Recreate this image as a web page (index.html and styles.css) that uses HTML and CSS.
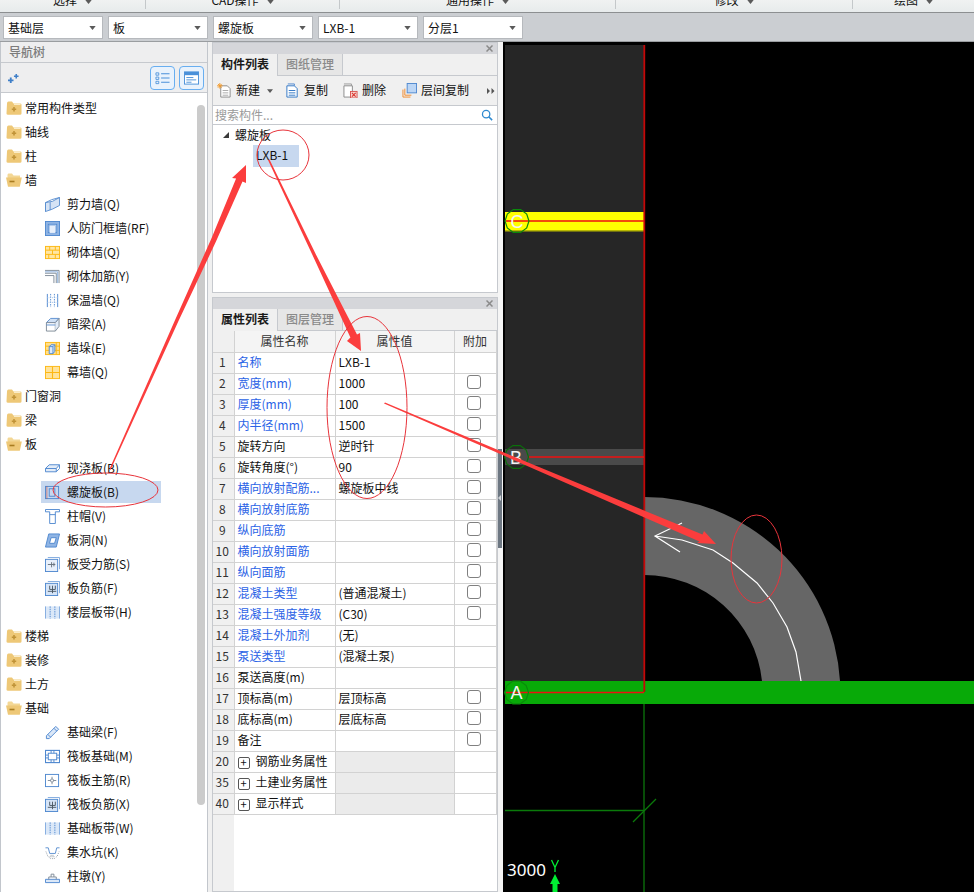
FILE: index.html
```html
<!DOCTYPE html>
<html lang="zh">
<head>
<meta charset="utf-8">
<title>螺旋板</title>
<link rel="stylesheet" href="styles.css">
</head>
<body>
<svg class="defs" width="0" height="0">
  <defs>
    <symbol id="fc" viewBox="0 0 16 14"><path d="M1 2.500Q1 .5 2.500 .5H6L7.500 2.500H14Q15.500 2.500 15.500 3.500V12.500Q15.500 13.800 14 13.800H2Q.5 13.800 .5 12.500Z" fill="#eec877"/><path d="M8 2.500H14.500V4H8Z" fill="#fbecc8"/><path d="M5.800 8.300H10.200M8 6.100V10.500" stroke="#c09338" stroke-width="1.600"/></symbol>
    <symbol id="fo" viewBox="0 0 16 14"><path d="M1.500 2Q1.500 .5 2.500 .5H6L7.500 2.500H14V5H1.500Z" fill="#f3d795"/><path d="M0 4.500H15.800L13.800 13.800H2Z" fill="#eec877"/><path d="M3.500 8.500H8.500" stroke="#a97c20" stroke-width="1.600"/></symbol>
    <symbol id="i-shear" viewBox="0 0 16 16"><path d="M.5 6Q8 6 15.500 .5V9Q8 13.500 .5 15.500Z" fill="#d5e3f5" stroke="#5b8fd0"/><path d="M.5 6V15.500M5.500 5.500V14" stroke="#5b8fd0"/><path d="M.5 6Q6 2.500 15.500 .5" stroke="#5b8fd0" fill="none"/></symbol>
    <symbol id="i-door" viewBox="0 0 16 16"><rect x=".5" y=".5" width="15" height="15" fill="#8fb4e4" stroke="#4f88cf"/><rect x="3.500" y="3.500" width="9" height="9" fill="#fff" stroke="#4f88cf"/><rect x="5" y="5" width="6" height="8" fill="#e8f0fb" stroke="#7ea9de" stroke-width=".6"/></symbol>
    <symbol id="i-brick" viewBox="0 0 16 16"><rect x=".5" y="1.500" width="15" height="13" fill="#ffe6a3" stroke="#fdb813"/><path d="M.5 5.500H15.500M.5 10H15.500M5 1.500V5.500M11 1.500V5.500M8 5.500V10M4 10V14.500M11 10V14.500" stroke="#fdb813"/></symbol>
    <symbol id="i-rebar" viewBox="0 0 16 16"><path d="M0 1.500H15V15M0 4.500H12V15M0 7H9.500V15" fill="none" stroke="#7e8a96"/><path d="M0 3H13.500V15" fill="none" stroke="#5b8fd0" stroke-width=".7"/></symbol>
    <symbol id="i-insul" viewBox="0 0 16 16"><path d="M2.500 1V15M13.500 1V15" stroke="#4f88cf"/><path d="M6 1V15M10 1V15" stroke="#4f88cf" stroke-dasharray="1.500 1.200"/><path d="M2.500 5H13.500M2.500 10H13.500" stroke="#9dbfe8" stroke-dasharray="1 1.500"/></symbol>
    <symbol id="i-beam" viewBox="0 0 16 16"><path d="M1.500 6L6 1.500H15L11 6Z" fill="#cfe0f5" stroke="#5b8fd0"/><path d="M1.500 6H11V15H1.500Z" fill="#fff" stroke="#7e8a96"/><path d="M11 6L15 1.500V10L11 15" fill="#e2ecf8" stroke="#7e8a96"/><path d="M1.500 8.500H11" stroke="#5b8fd0"/></symbol>
    <symbol id="i-pier" viewBox="0 0 16 16"><rect x=".5" y="1.500" width="15" height="13" fill="#ffdf8e" stroke="#fdb813"/><path d="M.5 5.500H15.500M.5 10H15.500M12 1.500V14.500" stroke="#fdb813"/><path d="M4.500 6L6.500 4H10.500V11L8.500 13.500H4.500Z" fill="#dce9f8" stroke="#4f88cf"/><path d="M4.500 6H8.500V13.500M8.500 6L10.500 4" fill="none" stroke="#4f88cf"/></symbol>
    <symbol id="i-curtain" viewBox="0 0 16 16"><rect x=".5" y="1.500" width="15" height="13" fill="#ffe39b" stroke="#fdb813"/><path d="M.5 8H15.500M8 1.500V14.500" stroke="#fdb813" stroke-width="1.200"/></symbol>
    <symbol id="i-slab" viewBox="0 0 16 16"><path d="M.5 8L4.500 4H15.500L12 8V11.500H.5Z" fill="#e2ecf8" stroke="#4f88cf"/><path d="M.5 8H12M12 11.500L15.500 8V4" fill="none" stroke="#4f88cf"/></symbol>
    <symbol id="i-spiral" viewBox="0 0 16 16"><rect x=".5" y="1.500" width="14" height="13" fill="none" stroke="#4f88cf"/><rect x="4.500" y="4" width="6" height="8" fill="none" stroke="#4f88cf"/><path d="M2 1.500V14.500" stroke="#c0392b" stroke-width=".6"/></symbol>
    <symbol id="i-cap" viewBox="0 0 16 16"><path d="M.5 .5H15.500V3H11V15.500H5V3H.5Z" fill="#fff" stroke="#4f88cf"/><path d="M5 6H11" stroke="#4f88cf"/></symbol>
    <symbol id="i-hole" viewBox="0 0 16 16"><path d="M4 1H15.500L12 15H.5Z" fill="#8fb4e4" stroke="#4f88cf"/><path d="M6.500 5H12L10.200 11H4.800Z" fill="#fff" stroke="#4f88cf"/></symbol>
    <symbol id="i-slabbar" viewBox="0 0 16 16"><path d="M3 .5H15.500V13" fill="none" stroke="#7ea9de"/><rect x=".5" y="2.500" width="13" height="13" fill="#e8f0fb" stroke="#4f88cf"/><path d="M3 8H11M7 5.500V11M9.500 6V10" stroke="#66727e" fill="none"/></symbol>
    <symbol id="i-slabneg" viewBox="0 0 16 16"><path d="M3 .5H15.500V13" fill="none" stroke="#7ea9de"/><rect x=".5" y="2.500" width="13" height="13" fill="#d5e4f7" stroke="#4f88cf"/><path d="M5 5V9H11V5M3 11H12M8 5V13" stroke="#4a5662" fill="none"/></symbol>
    <symbol id="i-band" viewBox="0 0 16 16"><rect x=".5" y="1.500" width="15" height="13" fill="#dbe8f8"/><path d="M.5 1.500V14.500M15.500 1.500V14.500" stroke="#7ea9de"/><path d="M5.500 1.500V14.500M10.500 1.500V14.500" stroke="#4f88cf" stroke-dasharray="1.500 1"/></symbol>
    <symbol id="i-fbeam" viewBox="0 0 16 16"><path d="M1.500 11.500L11.500 1.500L14.500 4.500L4.500 14.500L1.500 14.500Z" fill="#dbe8f8" stroke="#4f88cf"/><path d="M9.500 3.500L12.500 6.500M3 10L6 13" stroke="#4f88cf"/></symbol>
    <symbol id="i-raft" viewBox="0 0 16 16"><rect x=".5" y="1.500" width="15" height="13" fill="#fff" stroke="#4f88cf" stroke-width="1.200"/><rect x="3.500" y="4.500" width="9" height="7" fill="none" stroke="#4f88cf"/><path d="M.5 6.500H3.500M.5 9.500H3.500M12.500 6.500H15.500M12.500 9.500H15.500M6.500 1.500V4.500M9.500 1.500V4.500M6.500 11.500V14.500M9.500 11.500V14.500" stroke="#4f88cf"/></symbol>
    <symbol id="i-raftbar" viewBox="0 0 16 16"><rect x=".5" y="1.500" width="14" height="13" fill="#fff" stroke="#4f88cf"/><path d="M3 8H6M9 8H12M7.500 4V6.500M7.500 9.500V12" stroke="#7e8a96"/><rect x="6" y="6.500" width="3" height="3" rx="1" fill="none" stroke="#7e8a96"/></symbol>
    <symbol id="i-pit" viewBox="0 0 16 16"><path d="M.5 3H3.500L5 9H11L12.500 3H15.500" fill="none" stroke="#5b8fd0"/><path d="M1 7L3 12L6 14.500H10L13 12L15 7" fill="none" stroke="#8a949e" stroke-dasharray="1 1.200"/><path d="M6 11H10M5 12.500H11" stroke="#8a949e" stroke-dasharray="1 1"/></symbol>
    <symbol id="i-pad" viewBox="0 0 16 16"><path d="M.5 11H15.500V14.500H.5Z" fill="#dbe8f8" stroke="#4f88cf"/><path d="M4 11V8.500H12V11M6.500 8.500V5.500H9.500V8.500" fill="none" stroke="#7e8a96"/></symbol>
    <symbol id="caret" viewBox="0 0 8 5"><path d="M0 0H8L4 5Z" fill="#5a5a5a"/></symbol>
    <symbol id="cross" viewBox="0 0 7 7"><path d="M.5 .5L6.500 6.500M6.500 .5L.5 6.500" stroke="#8a8a8a" stroke-width="1.500"/></symbol>
    <polygon id="ring" points="12,0 9.700,7 3.700,11.400 -3.700,11.400 -9.700,7 -12,0 -9.700,-7 -3.700,-11.400 3.700,-11.400 9.700,-7" fill="none" stroke-width="1.200"/>
  </defs>
</svg>

<div class="ribbon">
  <div class="rib-group rib-a"><span>选择</span><svg class="rib-caret"><use href="#caret"/></svg></div>
  <div class="rib-group rib-b"><span>CAD操作</span><svg class="rib-caret"><use href="#caret"/></svg></div>
  <div class="rib-group rib-c"><span>通用操作</span><svg class="rib-caret"><use href="#caret"/></svg></div>
  <div class="rib-group rib-d"><span>修改</span><svg class="rib-caret"><use href="#caret"/></svg></div>
  <div class="rib-group rib-e"><span>绘图</span><svg class="rib-caret"><use href="#caret"/></svg></div>
</div>

<div class="selectors">
  <div class="select"><span>基础层</span><svg class="sel-caret"><use href="#caret"/></svg></div>
  <div class="select"><span>板</span><svg class="sel-caret"><use href="#caret"/></svg></div>
  <div class="select"><span>螺旋板</span><svg class="sel-caret"><use href="#caret"/></svg></div>
  <div class="select"><span>LXB-1</span><svg class="sel-caret"><use href="#caret"/></svg></div>
  <div class="select"><span>分层1</span><svg class="sel-caret"><use href="#caret"/></svg></div>
</div>

<div class="main">
  <aside class="nav">
    <div class="nav-title">导航树</div>
    <div class="nav-tools">
      <svg class="sparkle" viewBox="0 0 14 12"><path d="M4 5V11M1 8H7" stroke="#3f7fc8" stroke-width="2"/><path d="M10 1V6M7.500 3.500H12.500" stroke="#3f7fc8" stroke-width="1.700"/></svg>
      <div class="nav-btn first"><svg viewBox="0 0 16 14"><path d="M1 1.500H4V4H1ZM1 6H4V8.500H1ZM1 10.500H4V13H1Z" fill="none" stroke="#4a90d9" stroke-width=".9"/><path d="M6.500 2.500H15.500M6.500 7H15.500M6.500 11.500H15.500" stroke="#4a90d9" stroke-width="1.100"/></svg></div>
      <div class="nav-btn"><svg viewBox="0 0 16 14"><rect x=".5" y=".5" width="15" height="13" fill="#fff" stroke="#4a90d9"/><rect x=".5" y=".5" width="15" height="3.500" fill="#4a90d9"/><path d="M2.500 6.500H10M2.500 9H13M2.500 11.500H8" stroke="#4a90d9"/></svg></div>
    </div>
    <div class="tree">
      <div class="scrollbar"></div>
      <div class="row"><svg class="folder"><use href="#fc"/></svg><span>常用构件类型</span></div>
      <div class="row"><svg class="folder"><use href="#fc"/></svg><span>轴线</span></div>
      <div class="row"><svg class="folder"><use href="#fc"/></svg><span>柱</span></div>
      <div class="row"><svg class="folder"><use href="#fo"/></svg><span>墙</span></div>
      <div class="row child"><svg class="ico"><use href="#i-shear"/></svg><span>剪力墙(Q)</span></div>
      <div class="row child"><svg class="ico"><use href="#i-door"/></svg><span>人防门框墙(RF)</span></div>
      <div class="row child"><svg class="ico"><use href="#i-brick"/></svg><span>砌体墙(Q)</span></div>
      <div class="row child"><svg class="ico"><use href="#i-rebar"/></svg><span>砌体加筋(Y)</span></div>
      <div class="row child"><svg class="ico"><use href="#i-insul"/></svg><span>保温墙(Q)</span></div>
      <div class="row child"><svg class="ico"><use href="#i-beam"/></svg><span>暗梁(A)</span></div>
      <div class="row child"><svg class="ico"><use href="#i-pier"/></svg><span>墙垛(E)</span></div>
      <div class="row child"><svg class="ico"><use href="#i-curtain"/></svg><span>幕墙(Q)</span></div>
      <div class="row"><svg class="folder"><use href="#fc"/></svg><span>门窗洞</span></div>
      <div class="row"><svg class="folder"><use href="#fc"/></svg><span>梁</span></div>
      <div class="row"><svg class="folder"><use href="#fo"/></svg><span>板</span></div>
      <div class="row child"><svg class="ico"><use href="#i-slab"/></svg><span>现浇板(B)</span></div>
      <div class="row child selected"><svg class="ico"><use href="#i-spiral"/></svg><span>螺旋板(B)</span></div>
      <div class="row child"><svg class="ico"><use href="#i-cap"/></svg><span>柱帽(V)</span></div>
      <div class="row child"><svg class="ico"><use href="#i-hole"/></svg><span>板洞(N)</span></div>
      <div class="row child"><svg class="ico"><use href="#i-slabbar"/></svg><span>板受力筋(S)</span></div>
      <div class="row child"><svg class="ico"><use href="#i-slabneg"/></svg><span>板负筋(F)</span></div>
      <div class="row child"><svg class="ico"><use href="#i-band"/></svg><span>楼层板带(H)</span></div>
      <div class="row"><svg class="folder"><use href="#fc"/></svg><span>楼梯</span></div>
      <div class="row"><svg class="folder"><use href="#fc"/></svg><span>装修</span></div>
      <div class="row"><svg class="folder"><use href="#fc"/></svg><span>土方</span></div>
      <div class="row"><svg class="folder"><use href="#fo"/></svg><span>基础</span></div>
      <div class="row child"><svg class="ico"><use href="#i-fbeam"/></svg><span>基础梁(F)</span></div>
      <div class="row child"><svg class="ico"><use href="#i-raft"/></svg><span>筏板基础(M)</span></div>
      <div class="row child"><svg class="ico"><use href="#i-raftbar"/></svg><span>筏板主筋(R)</span></div>
      <div class="row child"><svg class="ico"><use href="#i-slabneg"/></svg><span>筏板负筋(X)</span></div>
      <div class="row child"><svg class="ico"><use href="#i-band"/></svg><span>基础板带(W)</span></div>
      <div class="row child"><svg class="ico"><use href="#i-pit"/></svg><span>集水坑(K)</span></div>
      <div class="row child"><svg class="ico"><use href="#i-pad"/></svg><span>柱墩(Y)</span></div>
    </div>
  </aside>

  <div class="middle">
    <section class="panel top-panel">
      <div class="grip"><svg class="close"><use href="#cross"/></svg></div>
      <div class="tabs"><div class="tab active">构件列表</div><div class="tab">图纸管理</div></div>
      <div class="tools">
        <div class="tool"><svg viewBox="0 0 16 16"><path d="M4 3H11L14 6V15H4Z" fill="#fff" stroke="#8a8a8a"/><path d="M6 8H12M6 10.500H12M6 13H12" stroke="#a8a8a8"/><path d="M3 0V6M0 3H6M1 1L5 5M5 1L1 5" stroke="#f29b2c"/></svg><span>新建</span><svg class="tool-caret"><use href="#caret"/></svg></div>
        <div class="tool t2"><svg viewBox="0 0 16 16"><path d="M3 1H10V3" fill="none" stroke="#4f88cf"/><path d="M2 3H10L13 6V15H2Z" fill="#fff" stroke="#2f75c4"/><path d="M4 8H11M4 10.500H11M4 13H11" stroke="#2f75c4"/></svg><span>复制</span></div>
        <div class="tool t3"><svg viewBox="0 0 16 16"><path d="M1 1H9V3" fill="none" stroke="#9a9a9a"/><path d="M1 3H10V15H1Z" fill="#fff" stroke="#8a8a8a"/><rect x="8" y="9" width="7" height="7" fill="#f6d5d0" stroke="#d9534f"/><path d="M9.500 10.500L13.500 14.500M13.500 10.500L9.500 14.500" stroke="#d9342b" stroke-width="1.200"/></svg><span>删除</span></div>
        <div class="tool t4"><svg viewBox="0 0 16 16"><path d="M1 7V15H9M3 6V13H10" fill="none" stroke="#f08a2c"/><rect x="5.500" y=".5" width="10" height="10" fill="#bcd6f5" stroke="#4f88cf"/></svg><span>层间复制</span></div>
        <svg class="more" viewBox="0 0 8 6"><path d="M0 0L3 3L0 6ZM4.500 0L7.500 3L4.500 6Z" fill="#555"/></svg>
      </div>
      <div class="search"><span>搜索构件...</span><svg viewBox="0 0 14 14"><circle cx="6" cy="6" r="4.300" fill="none" stroke="#2f8ad0" stroke-width="1.500"/><path d="M9 9L13 13" stroke="#2f8ad0" stroke-width="1.800"/></svg></div>
      <div class="comp-tree">
        <div class="comp-head"><i class="tri"></i><span>螺旋板</span></div>
        <div class="comp-item">LXB-1</div>
      </div>
    </section>

    <section class="panel bottom-panel">
      <div class="grip"><svg class="close"><use href="#cross"/></svg></div>
      <div class="tabs"><div class="tab active">属性列表</div><div class="tab">图层管理</div></div>
      <div class="table-wrap">
        <table class="props">
          <colgroup><col class="c1"><col class="c2"><col class="c3"><col class="c4"></colgroup>
          <thead><tr><th></th><th>属性名称</th><th>属性值</th><th>附加</th></tr></thead>
          <tbody>
            <tr><td class="n">1</td><td class="blue">名称</td><td>LXB-1</td><td></td></tr>
            <tr><td class="n">2</td><td class="blue">宽度(mm)</td><td>1000</td><td class="k"><i></i></td></tr>
            <tr><td class="n">3</td><td class="blue">厚度(mm)</td><td>100</td><td class="k"><i></i></td></tr>
            <tr><td class="n">4</td><td class="blue">内半径(mm)</td><td>1500</td><td class="k"><i></i></td></tr>
            <tr><td class="n">5</td><td>旋转方向</td><td>逆时针</td><td class="k"><i></i></td></tr>
            <tr><td class="n">6</td><td>旋转角度(°)</td><td>90</td><td class="k"><i></i></td></tr>
            <tr><td class="n">7</td><td class="blue">横向放射配筋...</td><td>螺旋板中线</td><td class="k"><i></i></td></tr>
            <tr><td class="n">8</td><td class="blue">横向放射底筋</td><td></td><td class="k"><i></i></td></tr>
            <tr><td class="n">9</td><td class="blue">纵向底筋</td><td></td><td class="k"><i></i></td></tr>
            <tr><td class="n">10</td><td class="blue">横向放射面筋</td><td></td><td class="k"><i></i></td></tr>
            <tr><td class="n">11</td><td class="blue">纵向面筋</td><td></td><td class="k"><i></i></td></tr>
            <tr><td class="n">12</td><td class="blue">混凝土类型</td><td>(普通混凝土)</td><td class="k"><i></i></td></tr>
            <tr><td class="n">13</td><td class="blue">混凝土强度等级</td><td>(C30)</td><td class="k"><i></i></td></tr>
            <tr><td class="n">14</td><td class="blue">混凝土外加剂</td><td>(无)</td><td></td></tr>
            <tr><td class="n">15</td><td class="blue">泵送类型</td><td>(混凝土泵)</td><td></td></tr>
            <tr><td class="n">16</td><td>泵送高度(m)</td><td></td><td></td></tr>
            <tr><td class="n">17</td><td>顶标高(m)</td><td>层顶标高</td><td class="k"><i></i></td></tr>
            <tr><td class="n">18</td><td>底标高(m)</td><td>层底标高</td><td class="k"><i></i></td></tr>
            <tr><td class="n">19</td><td>备注</td><td></td><td class="k"><i></i></td></tr>
            <tr><td class="n">20</td><td class="grp"><b>+</b>钢筋业务属性</td><td class="shade"></td><td></td></tr>
            <tr><td class="n">35</td><td class="grp"><b>+</b>土建业务属性</td><td class="shade"></td><td></td></tr>
            <tr><td class="n">40</td><td class="grp"><b>+</b>显示样式</td><td class="shade"></td><td></td></tr>
          </tbody>
        </table>
        <div class="table-rest"></div>
      </div>
    </section>
  </div>

  <div class="splitter"><div class="handle"></div></div>

  <div class="canvas">
    <svg class="cad" width="471" height="850" viewBox="503 42 471 850">
      <rect x="503" y="42" width="471" height="850" fill="#000"/>
      <rect x="505" y="45" width="139" height="636" fill="#262626"/>
      <path d="M644 497A196 196 0 0 1 840 681H762A118 118 0 0 0 644 575Z" fill="#666"/>
      <rect x="505" y="212" width="139" height="19" fill="#ffff00"/>
      <rect x="505" y="230" width="139" height="1.500" fill="#b8b800"/>
      <rect x="505" y="449" width="139" height="16" fill="#4a4a4a"/>
      <rect x="505" y="681" width="469" height="23" fill="#08aa08"/>
      <path d="M644 704V892" stroke="#0a660a" stroke-width="1.500"/>
      <path d="M505 810.500H644" stroke="#0a7a0a" stroke-width="1.500"/>
      <path d="M633 822L656 799" stroke="#0a7a0a" stroke-width="1.200"/>
      <path d="M644.300 45V692" stroke="#c40808" stroke-width="1.800"/>
      <path d="M506 221H644M528 457H644M506 692.500H644" stroke="#ee1010" stroke-width="1.500"/>
      <path d="M682 523L655 536L680 552M655 536L682 540L713 550L733 563L757 583L773 603L787 627L796 652L801 681" fill="none" stroke="#fff" stroke-width="1.200"/>
      <use href="#ring" transform="translate(517 221)" stroke="#0a8a0a"/>
      <use href="#ring" transform="translate(516.500 457)" stroke="#0a700a"/>
      <use href="#ring" transform="translate(516.500 692.500)" stroke="#0a8a0a"/>
      <text x="517" y="227.500" class="axis">C</text>
      <text x="516" y="463.500" class="axis">B</text>
      <text x="516.500" y="699" class="axis">A</text>
      <text x="507" y="876" class="scale">3000</text>
      <path d="M551.500 860L555 867.500L558.500 860M555 867.500V872" fill="none" stroke="#00ee33" stroke-width="1.300"/>
      <path d="M555 874L560 884H557.500V892H552.500V884H550Z" fill="#00ee33"/>
    </svg>
  </div>

  <svg class="notes" width="974" height="892" viewBox="0 0 974 892">
    <g fill="#fb3d3d">
      <polygon points="109.500,469 110.500,470 178.600,320.700 216.200,241.100 242.500,181.400 246,183 246,165 232,178 236.100,178.600 211.200,238.900 175.400,319.300"/>
      <polygon points="268,160 269.500,159.500 315.800,254.300 338.600,298.800 357,334.400 360,333 361,351 347,341 350.400,337.600 333.800,301.200 312.800,255.700"/>
      <polygon points="384,403.500 385,402.500 513.600,456.600 645.200,510.900 702.500,534.500 704,531 716,544 697,543 699.500,541.500 642.800,516.700 512.400,459.400"/>
    </g>
    <g fill="none" stroke="#e8343b" stroke-width="1">
      <ellipse cx="283" cy="155" rx="26" ry="25"/>
      <ellipse cx="105.500" cy="490" rx="52.500" ry="17"/>
      <ellipse cx="367" cy="407.500" rx="40" ry="91"/>
      <ellipse cx="756.500" cy="559" rx="25.500" ry="44"/>
    </g>
  </svg>
</div>
</body>
</html>
```

FILE: styles.css
```css
* { box-sizing: border-box; }
html, body { margin: 0; height: 100%; overflow: hidden; }
body {
  position: relative;
  width: 974px;
  height: 892px;
  font-family: "Noto Sans CJK SC", "Noto Sans", sans-serif;
  font-size: 12px;
  color: #111;
  background: #f0f0f0;
  display: flex;
  flex-direction: column;
}
.defs { position: absolute; }

.ribbon {
  height: 13px;
  flex: none;
  display: flex;
  align-items: flex-start;
  background: linear-gradient(#f0f2f2, #e7ebec);
  border-bottom: 1px solid #8c8f91;
  overflow: hidden;
}
.rib-group {
  height: 9px;
  padding-bottom: 3px;
  display: flex;
  align-items: flex-end;
  justify-content: center;
  gap: 8px;
  border-right: 1px solid #c4c8ca;
  line-height: 12px;
  font-size: 12px;
}
.rib-a { width: 146px; }
.rib-b { width: 194px; }
.rib-c { width: 276px; }
.rib-d { width: 237px; }
.rib-e { flex: 1; border-right: 0; }
.rib-caret { width: 7px; height: 4px; margin-bottom: 2px; }

.selectors {
  height: 29px;
  flex: none;
  padding: 3px 0 0 3px;
  display: flex;
  gap: 5px;
  background: #cbced2;
  border-bottom: 1px solid #9a9da0;
}
.select {
  width: 100px;
  height: 23px;
  padding: 0 6px 0 4px;
  display: flex;
  align-items: center;
  justify-content: space-between;
  background: #fff;
  border: 1px solid #b6b9bd;
  font-size: 12px;
}
.sel-caret { width: 7px; height: 4px; }

.main {
  flex: 1;
  display: flex;
  min-height: 0;
}

.nav {
  width: 208px;
  flex: none;
  display: flex;
  flex-direction: column;
  background: #eeeeef;
  border-left: 1px solid #c2c6cc;
  border-right: 1px solid #c2c6cc;
}
.nav-title {
  height: 21px;
  padding-left: 8px;
  line-height: 19px;
  font-weight: 500;
  color: #7c7c7c;
  border-bottom: 1px solid #c6c9ce;
}
.nav-tools {
  height: 30px;
  padding: 3px 3px 0 6px;
  display: flex;
  align-items: flex-start;
  gap: 4px;
  border-bottom: 1px solid #c6c9ce;
}
.sparkle { width: 13px; height: 11px; margin-top: 7px; margin-right: auto; }
.nav-btn {
  width: 25px;
  height: 24px;
  display: flex;
  align-items: center;
  justify-content: center;
  background: #e9f2fc;
  border: 1px solid #68aef0;
  border-radius: 4px;
}
.nav-btn svg { width: 15px; height: 14px; }
.tree {
  position: relative;
  flex: 1;
  padding-top: 3px;
  background: #fff;
  overflow: hidden;
}
.scrollbar {
  position: absolute;
  left: 196px;
  top: 12px;
  width: 8px;
  height: 700px;
  border-radius: 4px;
  background: #cbcbcb;
}
.row {
  height: 24px;
  display: flex;
  align-items: center;
  white-space: nowrap;
  font-size: 12px;
}
.row > span { position: relative; top: -1px; }
.folder { width: 16px; height: 14px; margin: 0 3px 0 5px; flex: none; }
.row.child { margin-left: 40px; padding-left: 4px; width: 120px; }
.row.child .ico { width: 15px; height: 15px; margin-right: 7px; flex: none; }
.row.child.selected { height: 22px; margin-top: 1px; margin-bottom: 1px; background: #c7d8ef; }

.middle {
  width: 290px;
  flex: none;
  padding: 0 0 0 4px;
  display: flex;
  flex-direction: column;
  gap: 4px;
}
.panel {
  width: 286px;
  display: flex;
  flex-direction: column;
  background: #fff;
  border: 1px solid #c6c9ce;
}
.top-panel { height: 251px; }
.bottom-panel { flex: 1; min-height: 0; }
.grip {
  height: 11px;
  flex: none;
  background: #d5d6da;
  display: flex;
  justify-content: flex-end;
  padding: 2px 4px 0 0;
}
.close { width: 7px; height: 7px; }
.tabs {
  height: 22px;
  flex: none;
  display: flex;
  background: #f0f0f0;
  border-bottom: 1px solid #c6c9ce;
}
.tab {
  width: 65px;
  padding-left: 8px;
  line-height: 19px;
  font-weight: 500;
  color: #8a8a8a;
  background: #e6e6e6;
  border-right: 1px solid #c6c9ce;
}
.tab.active {
  width: 65px;
  color: #1a1a1a;
  font-weight: 700;
  background: #f0f0f0;
  height: 22px;
}
.tools {
  position: relative;
  height: 30px;
  flex: none;
  display: flex;
  align-items: center;
  padding-left: 4px;
  background: #f0f0f0;
  border-bottom: 1px solid #c6c9ce;
}
.tool { display: flex; align-items: center; gap: 4px; }
.tool span { position: relative; top: -1px; }
.tool svg:first-child { width: 15px; height: 15px; }
.tool-caret { width: 6px; height: 4px; margin-left: 3px; }
.t2 { margin-left: 12px; }
.t3 { margin-left: 15px; }
.t4 { margin-left: 16px; }
.more { position: absolute; right: 2px; top: 12px; width: 8px; height: 6px; }
.search {
  height: 19px;
  flex: none;
  display: flex;
  align-items: center;
  justify-content: space-between;
  padding: 0 4px 0 2px;
  color: #9a9a9a;
  border-bottom: 1px solid #c6c9ce;
}
.search span { position: relative; top: -1px; }
.search svg { width: 12px; height: 12px; }
.comp-head { height: 20px; display: flex; align-items: center; padding-left: 10px; gap: 6px; }
.comp-head span { position: relative; top: -1px; }
.tri {
  width: 0;
  height: 0;
  border-left: 6px solid transparent;
  border-bottom: 6px solid #3a3a3a;
}
.comp-item {
  width: 46px;
  height: 22px;
  margin-left: 40px;
  padding-left: 3px;
  line-height: 20px;
  background: #c7d8ef;
}

.table-wrap { flex: 1; min-height: 0; display: flex; flex-direction: column; }
.props {
  width: 283px;
  table-layout: fixed;
  border-collapse: collapse;
  flex: none;
}
.c1 { width: 21px; }
.c2 { width: 101px; }
.c3 { width: 119px; }
.c4 { width: 42px; }
.props th {
  height: 21px;
  padding: 0 0 2px;
  font-weight: 400;
  color: #333;
  background: #f4f4f4;
  border: 1px solid #d2d2d2;
  border-top: 0;
  border-left: 0;
}
.props td {
  height: 21px;
  padding: 0 0 2px 3px;
  line-height: 18px;
  white-space: nowrap;
  overflow: hidden;
  border: 1px solid #d2d2d2;
  border-left: 0;
}
.props tr > :first-child { background: #f0f0f0; }
.props td.n { padding: 0 2px 2px 0; text-align: center; color: #333; font-size: 12px; }
.props td.blue { color: #2b63e6; }
.props td.k { padding: 0; text-align: center; }
.k i {
  display: block;
  width: 14px;
  height: 14px;
  margin: -3px 0 0 12px;
  border: 1px solid #808080;
  border-radius: 3px;
  background: #fff;
}
.grp b {
  display: inline-block;
  width: 12px;
  height: 12px;
  margin: 0 6px 0 0;
  vertical-align: -1px;
  border: 1px solid #555;
  border-radius: 2px;
  font-weight: 400;
  font-size: 11px;
  line-height: 9px;
  text-align: center;
}
.props td.shade { background: #ebebeb; }
.table-rest { flex: 1; width: 21px; background: #f0f0f0; }

.splitter {
  width: 5px;
  flex: none;
  padding-top: 407px;
  background: #f5f5f5;
}
.handle { position: relative; width: 4px; height: 99px; background: #6d7782; }
.handle::after {
  content: "";
  position: absolute;
  left: 0;
  top: 46px;
  border-right: 3px solid #d0d4d8;
  border-top: 3px solid transparent;
  border-bottom: 3px solid transparent;
}

.canvas { flex: 1; min-width: 0; background: #000; overflow: hidden; }
.cad { display: block; }
.axis { fill: #f4f4f4; font-family: "Liberation Sans", sans-serif; font-size: 18px; text-anchor: middle; }
.scale { fill: #fff; font-family: "Noto Sans", sans-serif; font-size: 17px; }

.notes { position: absolute; left: 0; top: 0; pointer-events: none; }
```
